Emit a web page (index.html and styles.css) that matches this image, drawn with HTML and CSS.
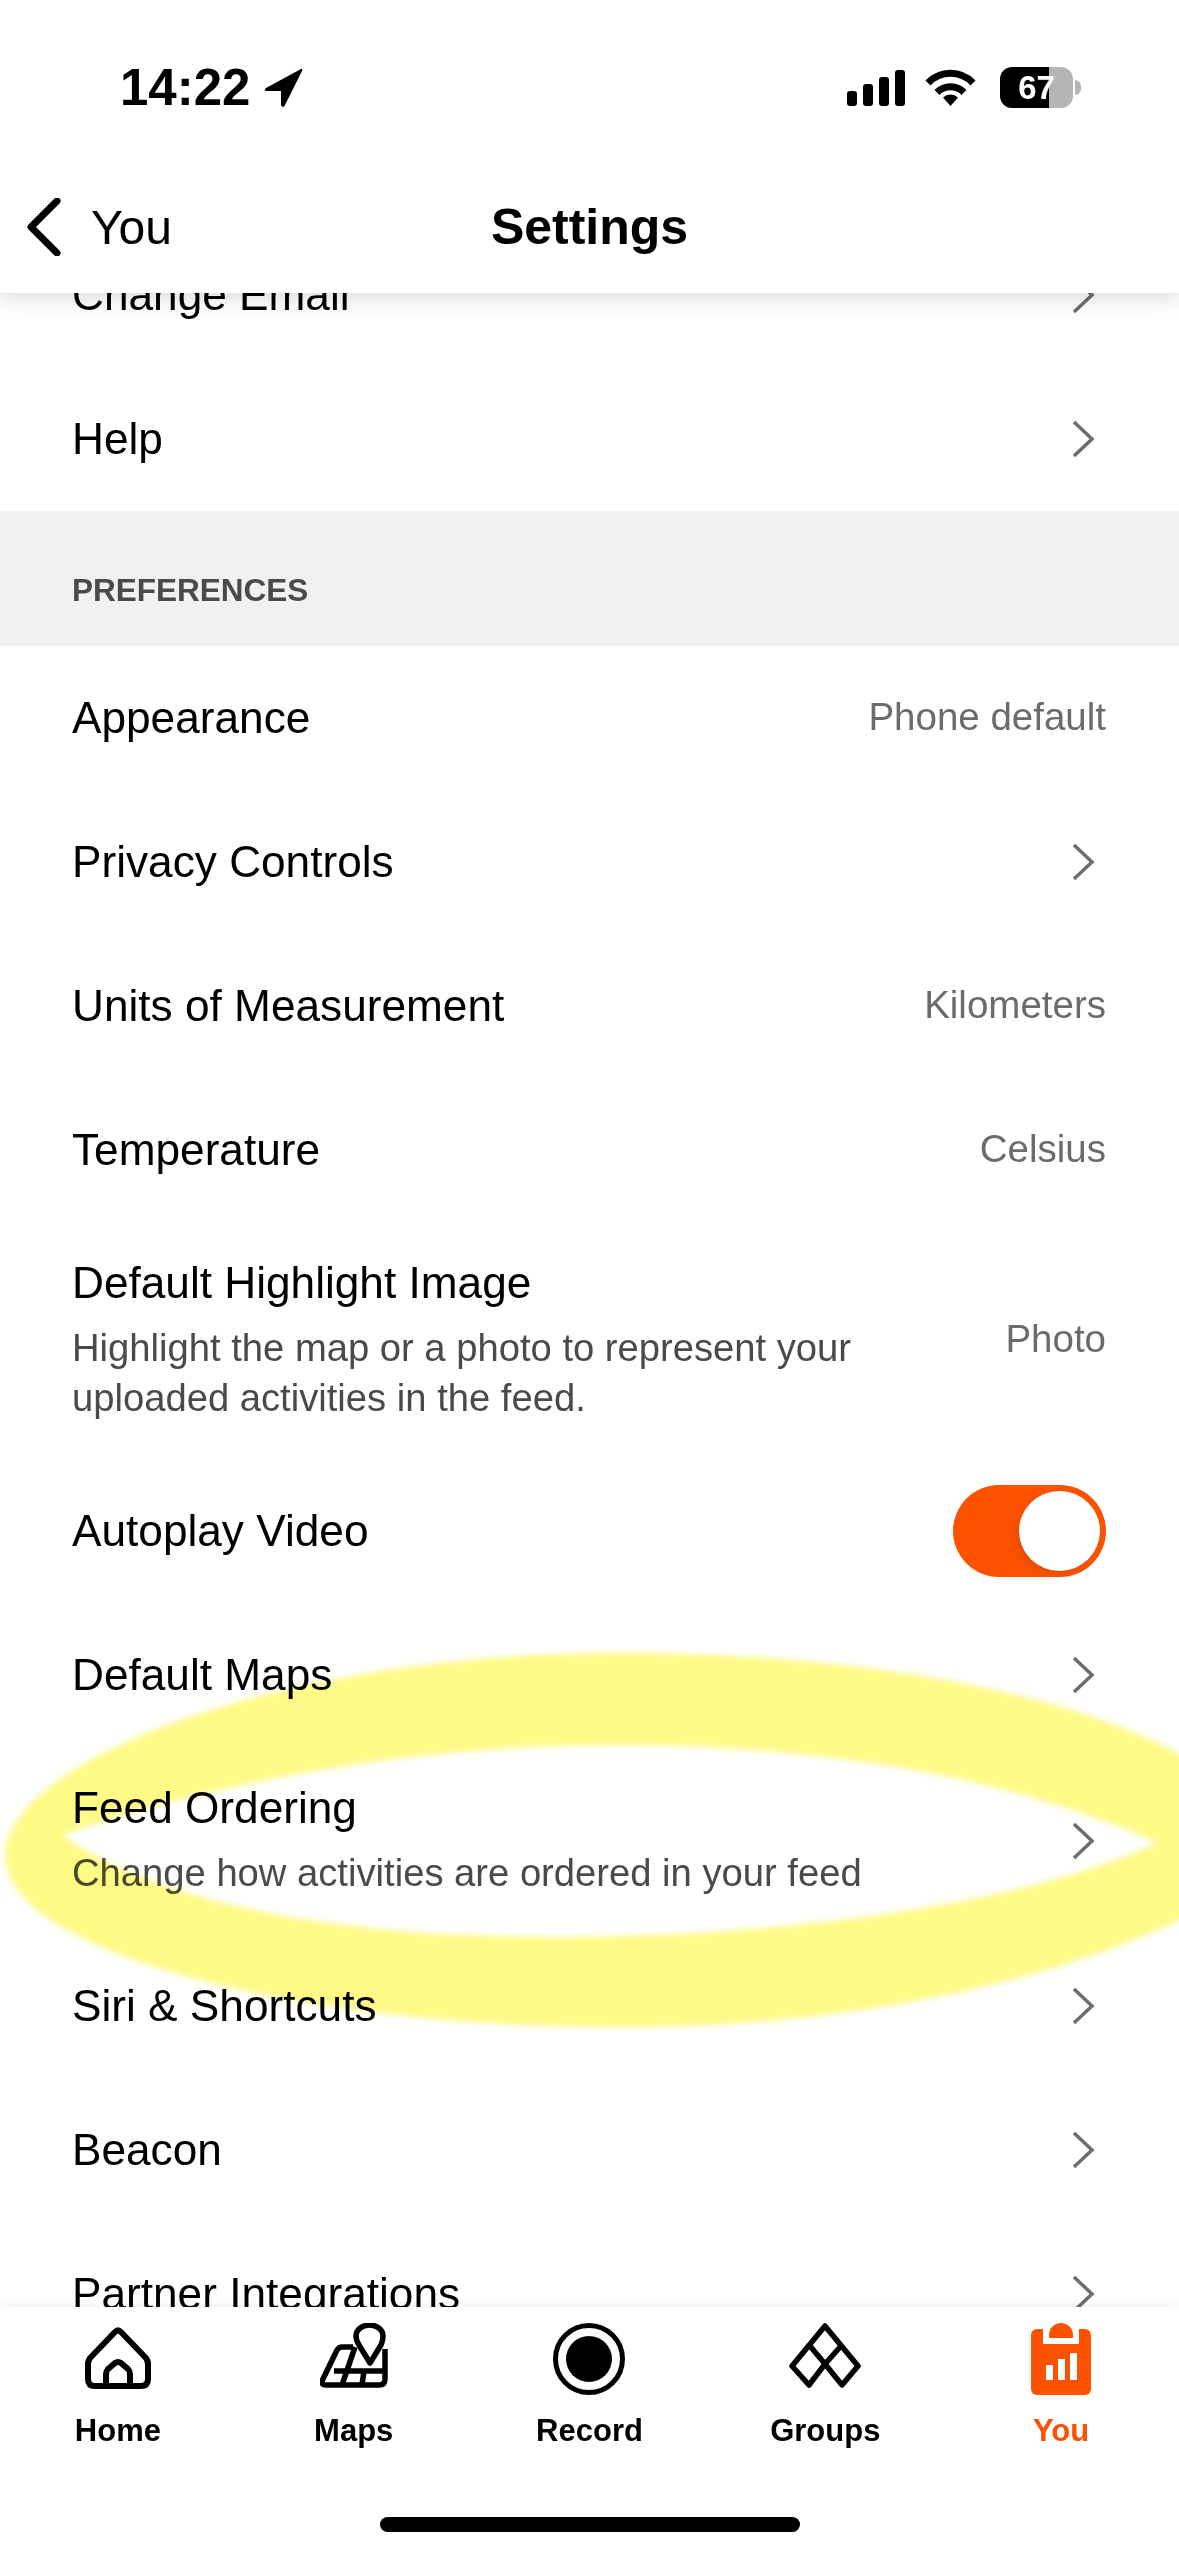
FILE: index.html
```html
<!DOCTYPE html>
<html>
<head>
    <meta charset="UTF-8">
    <title>Settings</title>
    <link rel="stylesheet" href="styles.css">
</head>
<body>
<div class="phone">
    <header class="top">
        <div class="status">
            <div class="status-left">
                <span class="time">14:22</span>
                <svg width="39" height="40" viewBox="0 0 39 40"><path d="M37 1 L2 20 Q-1 23 3 23 H17 V37 Q19 41 21 37 L38 3 Q39 0 37 1 Z" fill="#000"/></svg>
            </div>
            <div class="status-right">
                <svg width="58" height="36" viewBox="0 0 58 36" fill="#000">
                    <rect x="0" y="21" width="10" height="15" rx="3"/>
                    <rect x="16" y="14" width="10" height="22" rx="3"/>
                    <rect x="32" y="7" width="10" height="29" rx="3"/>
                    <rect x="48" y="0" width="10" height="36" rx="3"/>
                </svg>
                <svg class="wifi" width="51" height="37" viewBox="0 0 51 37">
                    <path d="M3 14 A 31 31 0 0 1 48 14" fill="none" stroke="#000" stroke-width="7"/>
                    <path d="M12 23.5 A 19 19 0 0 1 39 23.5" fill="none" stroke="#000" stroke-width="7"/>
                    <path d="M25.5 37 L18 28.5 A 11 11 0 0 1 33 28.5 Z" fill="#000"/>
                </svg>
                <div class="battery"><span>67</span></div>
            </div>
        </div>
        <nav class="nav">
            <div class="back">
                <svg width="36" height="58" viewBox="0 0 36 58"><path d="M31 3 L5 29 L31 55" fill="none" stroke="#000" stroke-width="7" stroke-linecap="round" stroke-linejoin="round"/></svg>
                <span>You</span>
            </div>
            <h1>Settings</h1>
            <div></div>
        </nav>
    </header>

    <main class="scroller">
        <div class="list">
            <div class="row"><span class="name">Change Email</span><svg class="chev" width="24" height="38" viewBox="0 0 24 38"><path d="M3 2 L21 19 L3 36" /></svg></div>
            <div class="row"><span class="name">Help</span><svg class="chev" width="24" height="38" viewBox="0 0 24 38"><path d="M3 2 L21 19 L3 36" /></svg></div>

            <div class="section">PREFERENCES</div>

            <div class="row"><span class="name">Appearance</span><span class="value">Phone default</span></div>
            <div class="row"><span class="name">Privacy Controls</span><svg class="chev" width="24" height="38" viewBox="0 0 24 38"><path d="M3 2 L21 19 L3 36" /></svg></div>
            <div class="row"><span class="name">Units of Measurement</span><span class="value">Kilometers</span></div>
            <div class="row"><span class="name">Temperature</span><span class="value">Celsius</span></div>
            <div class="row">
                <div class="text">
                    <div class="name">Default Highlight Image</div>
                    <div class="sub">Highlight the map or a photo to represent your uploaded activities in the feed.</div>
                </div>
                <span class="value">Photo</span>
            </div>
            <div class="row"><span class="name">Autoplay Video</span><div class="toggle"><div class="knob"></div></div></div>
            <div class="row"><span class="name">Default Maps</span><svg class="chev" width="24" height="38" viewBox="0 0 24 38"><path d="M3 2 L21 19 L3 36" /></svg></div>
            <div class="row">
                <div class="text">
                    <div class="name">Feed Ordering</div>
                    <div class="sub">Change how activities are ordered in your feed</div>
                </div>
                <svg class="chev" width="24" height="38" viewBox="0 0 24 38"><path d="M3 2 L21 19 L3 36" /></svg>
            </div>
            <div class="row"><span class="name">Siri &amp; Shortcuts</span><svg class="chev" width="24" height="38" viewBox="0 0 24 38"><path d="M3 2 L21 19 L3 36" /></svg></div>
            <div class="row"><span class="name">Beacon</span><svg class="chev" width="24" height="38" viewBox="0 0 24 38"><path d="M3 2 L21 19 L3 36" /></svg></div>
            <div class="row"><span class="name">Partner Integrations</span><svg class="chev" width="24" height="38" viewBox="0 0 24 38"><path d="M3 2 L21 19 L3 36" /></svg></div>
        </div>
    </main>

    <footer class="tabs">
        <div class="tab">
            <div class="icon">
                <svg width="66" height="66" viewBox="0 -4 66 66" fill="none" stroke="#000" stroke-width="6" stroke-linejoin="round">
                    <path d="M30 5 Q33 2 36 5 L60 30 Q63 33 63 37 V52 Q63 59 56 59 H10 Q3 59 3 52 V37 Q3 33 6 30 Z"/>
                    <path d="M21 59 V47 Q21 44 23 42 L30 36 Q33 34 36 36 L43 42 Q45 44 45 47 V59"/>
                </svg>
            </div>
            <span>Home</span>
        </div>
        <div class="tab">
            <div class="icon">
                <svg width="68" height="65" viewBox="0 0 68 65" fill="none" stroke="#000" stroke-width="5.5" stroke-linejoin="round">
                    <path d="M33 24 H22 Q19 24 17 27 L3 56 Q0 62 6 62 H59 Q65 62 65 56 V26"/>
                    <path d="M35 24 L22 62"/>
                    <path d="M14 48 H65"/>
                    <path d="M44 48 L42 62"/>
                    <path d="M50 40 L39 22 Q36 17 36 13 A 13.5 11 0 0 1 63 13 Q63 17 61 22 Z" fill="#fff"/>
                </svg>
            </div>
            <span>Maps</span>
        </div>
        <div class="tab">
            <div class="icon">
                <svg width="72" height="72" viewBox="0 0 72 72">
                    <circle cx="36" cy="36" r="33.5" fill="none" stroke="#000" stroke-width="5"/>
                    <circle cx="36" cy="36" r="23" fill="#000"/>
                </svg>
            </div>
            <span>Record</span>
        </div>
        <div class="tab">
            <div class="icon">
                <svg width="72" height="65" viewBox="0 0 72 65" fill="none" stroke="#000" stroke-width="5.5" stroke-linejoin="round">
                    <path d="M36 3 L69 43 L53 62 L36 41 L20 62 L3 43 Z"/>
                    <path d="M21 23 L36 41 L52 23"/>
                </svg>
            </div>
            <span>Groups</span>
        </div>
        <div class="tab active">
            <div class="icon">
                <svg width="60" height="72" viewBox="0 0 60 72">
                    <rect x="0" y="6" width="60" height="66" rx="6" fill="#fc5200"/>
                    <rect x="12" y="0" width="36" height="21" fill="#fff"/>
                    <path d="M18 15 V12 A12 12 0 0 1 42 12 V15 Z" fill="#fc5200"/>
                    <rect x="15" y="42" width="7" height="15" fill="#fff"/>
                    <rect x="27" y="36" width="7" height="21" fill="#fff"/>
                    <rect x="39" y="30" width="7" height="27" fill="#fff"/>
                </svg>
            </div>
            <span>You</span>
        </div>
    </footer>
    <div class="home-bar"></div>

    <!-- yellow marker drawn over the screenshot -->
    <svg class="marker" width="1179" height="2556" viewBox="0 0 1179 2556">
        <defs><filter id="soft"><feGaussianBlur stdDeviation="3"/></filter></defs>
        <path filter="url(#soft)" fill="#fdfa85" fill-rule="evenodd" d="M5 1853 C10 1760 280 1653 620 1653 C850 1653 1070 1690 1190 1760 L1190 1915 C1080 1970 880 2027 620 2027 C290 2027 0 1950 5 1853 Z M62 1835 C250 1770 450 1745 620 1745 C830 1745 1020 1780 1158 1843 C1020 1905 790 1937 550 1937 C330 1937 150 1900 62 1835 Z"/>
    </svg>
</div>
</body>
</html>
```

FILE: styles.css
```css
* {
    box-sizing: border-box;
}
body {
    margin: 0;
    background-color: #fff;
    font-family: "Liberation Sans", Arial, sans-serif;
    color: #000;
}
.phone {
    position: relative;
    width: 1179px;
    height: 2556px;
    display: flex;
    flex-direction: column;
    overflow: hidden;
    background-color: #fff;
}

/* top */
.top {
    position: relative;
    z-index: 2;
    height: 293px;
    flex: none;
    background-color: #fff;
    box-shadow: 0 4px 22px rgba(0, 0, 0, 0.16);
}
.status {
    height: 176px;
    padding: 64px 106px 0 120px;
    display: flex;
    justify-content: space-between;
    align-items: flex-start;
}
.status-left {
    display: flex;
    align-items: center;
    gap: 14px;
}
.time {
    font-size: 51px;
    font-weight: bold;
    line-height: 48px;
}
.status-right {
    display: flex;
    align-items: center;
    padding-top: 3px;
}
.wifi {
    margin: 0 24px 0 20px;
}
.battery {
    position: relative;
    width: 73px;
    height: 41px;
    border-radius: 12px;
    background: linear-gradient(90deg, #000 67%, #b5b5b5 67%);
    color: #fff;
    font-size: 33px;
    font-weight: bold;
    line-height: 41px;
    text-align: center;
}
.battery::after {
    content: "";
    position: absolute;
    left: 75px;
    top: 13px;
    width: 6px;
    height: 15px;
    border-radius: 0 6px 6px 0;
    background-color: #b5b5b5;
}
.nav {
    display: grid;
    grid-template-columns: 1fr auto 1fr;
    align-items: center;
    height: 58px;
    margin-top: 22px;
}
.nav h1 {
    margin: 0;
    font-size: 50px;
    font-weight: bold;
}
.back {
    display: flex;
    align-items: center;
    gap: 29px;
    padding-left: 26px;
    font-size: 48px;
}

/* list */
.scroller {
    flex: 1;
    overflow: hidden;
}
.list {
    margin-top: -70px;
}
.row {
    display: flex;
    align-items: center;
    justify-content: space-between;
    min-height: 144px;
    padding: 0 73px 0 72px;
}
.name {
    font-size: 44.2px;
    line-height: 50px;
}
.text {
    width: 850px;
    padding: 36px 0;
}
.sub {
    margin-top: 15px;
    font-size: 38.2px;
    line-height: 50px;
    color: #4a4a48;
}
.value {
    padding-bottom: 3px;
    font-size: 38.5px;
    color: #6b6b68;
}
.chev {
    margin-right: 11px;
    fill: none;
    stroke: #6d6d6d;
    stroke-width: 3.5;
}
.section {
    height: 135px;
    padding: 61px 72px 0;
    background-color: #f1f1ef;
    color: #4a4a48;
    font-size: 31.5px;
    font-weight: bold;
    line-height: 36px;
}
.toggle {
    width: 153px;
    height: 92px;
    padding: 6px;
    display: flex;
    justify-content: flex-end;
    border-radius: 46px;
    background-color: #fc5200;
}
.knob {
    width: 81px;
    height: 80px;
    border-radius: 50%;
    background-color: #fff;
    box-shadow: -4px 4px 10px rgba(0, 0, 0, 0.08);
}

/* bottom */
.tabs {
    position: relative;
    z-index: 2;
    flex: none;
    height: 249px;
    padding-top: 16px;
    display: grid;
    grid-template-columns: repeat(5, 1fr);
    align-items: start;
    background-color: #fff;
    box-shadow: 0 -2px 10px rgba(0, 0, 0, 0.06);
}
.tab {
    display: flex;
    flex-direction: column;
    align-items: center;
    font-size: 31px;
    font-weight: bold;
}
.tab .icon {
    height: 73px;
    margin-bottom: 17px;
}
.tab .icon svg {
    display: block;
}
.tab.active {
    color: #fc5200;
}
.home-bar {
    position: absolute;
    z-index: 3;
    left: 380px;
    top: 2517px;
    width: 420px;
    height: 15px;
    border-radius: 8px;
    background-color: #000;
}
.marker {
    position: absolute;
    z-index: 1;
    left: 0;
    top: 0;
    mix-blend-mode: multiply;
    pointer-events: none;
}
```
